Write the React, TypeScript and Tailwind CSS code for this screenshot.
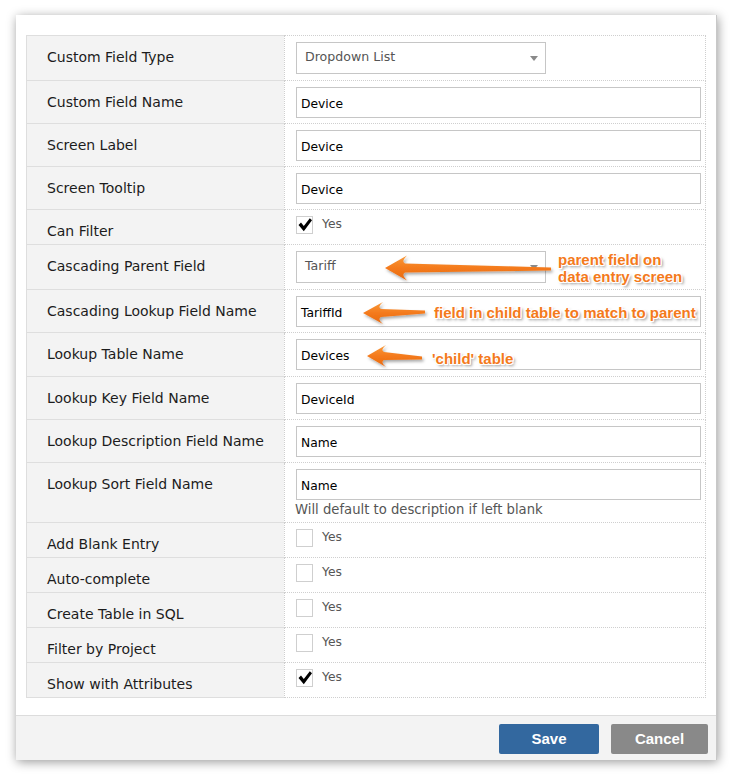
import React from "react";

const LABEL_FONT = { fontFamily: '"DejaVu Sans", Verdana, sans-serif' };

function Check() {
  return (
    <svg width="14" height="14" viewBox="0 0 14 14">
      <polygon points="0.5,7 3,4.6 5.8,8 11.8,0.3 14,2.3 5.8,13.2" fill="#000" />
    </svg>
  );
}

function CheckBox({ checked }: { checked?: boolean }) {
  return (
    <div className="flex items-center gap-[9px]">
      <div className="w-[17px] h-[18px] border border-[#cfcfcf] bg-white flex items-center justify-center">
        {checked ? <Check /> : null}
      </div>
      <span className="text-[12.3px] text-[#555] leading-[16px] -mt-[3px]">Yes</span>
    </div>
  );
}

function TextInput({ value }: { value: string }) {
  return (
    <div className="h-[31px] w-[405px] border border-[#c6c6c6] bg-white flex items-center pl-[4px] pt-[3px] text-[12.3px] text-black">
      {value}
    </div>
  );
}

function Select({ value }: { value: string }) {
  return (
    <div className="h-[32px] w-[250px] border border-[#c6c6c6] bg-white flex items-center justify-between pl-[8px] pr-[7px] text-[12.6px] text-[#555]">
      <span className="-mt-[1px]">{value}</span>
      <svg width="8" height="5" viewBox="0 0 8 5">
        <polygon points="0,0 8,0 4,5" fill="#8a8a8a" />
      </svg>
    </div>
  );
}

function Row({
  label,
  h,
  first,
  children,
}: {
  label: string;
  h: number;
  first?: boolean;
  children: React.ReactNode;
}) {
  return (
    <div className="flex" style={{ height: h }}>
      <div
        className={
          "w-[258px] shrink-0 bg-[#f3f3f3] border-l border-b border-solid border-[#dedede] pl-[20px] pt-[13px] text-[14px] leading-[16px] text-[#1c1c1c] " +
          (first ? "border-t" : "")
        }
      >
        {label}
      </div>
      <div
        className={
          "flex-1 border-l border-r border-b border-dotted border-[#cfcfcf] pl-[11px] pt-[6px] " +
          (first ? "border-t" : "")
        }
      >
        {children}
      </div>
    </div>
  );
}

function arrowPath(
  tx: number,
  ty: number,
  ex: number,
  ey: number,
  headLen: number,
  headHalf: number,
  s0: number,
  s1: number
) {
  const bx = tx + headLen;
  return [
    `M${tx},${ty}`,
    `L${bx},${ty - headHalf}`,
    `Q${bx - 6},${ty - s0 - 2} ${bx - 2},${ty - s0}`,
    `L${ex},${ey - s1}`,
    `L${ex},${ey + s1}`,
    `L${bx - 2},${ty + s0}`,
    `Q${bx - 6},${ty + s0 + 2} ${bx},${ty + headHalf}`,
    "Z",
  ].join(" ");
}

const annoClass =
  "absolute font-bold text-[15px] leading-[17px] text-[#f47a1c] whitespace-nowrap [text-shadow:1px_0_0_#fff,-1px_0_0_#fff,0_1px_0_#fff,0_-1px_0_#fff,1px_1px_0_#fff,-1px_-1px_0_#fff,1px_-1px_0_#fff,-1px_1px_0_#fff,2px_2px_3px_rgba(0,0,0,0.5)]";

export default function App() {
  return (
    <div
      className="relative w-[733px] h-[780px] bg-white pt-[15px] pl-[16px] overflow-hidden"
      style={LABEL_FONT}
    >
      <div className="w-[701px] h-[745px] bg-white flex flex-col border-r border-[#c8c8c8] shadow-[1px_2px_10px_rgba(0,0,0,0.4)]">
        <div className="flex-1 px-[10px] pt-[20px]">
          <Row label="Custom Field Type" h={46} first>
            <Select value="Dropdown List" />
          </Row>
          <Row label="Custom Field Name" h={43}>
            <TextInput value="Device" />
          </Row>
          <Row label="Screen Label" h={43}>
            <TextInput value="Device" />
          </Row>
          <Row label="Screen Tooltip" h={43}>
            <TextInput value="Device" />
          </Row>
          <Row label="Can Filter" h={35}>
            <CheckBox checked />
          </Row>
          <Row label="Cascading Parent Field" h={45}>
            <Select value="Tariff" />
          </Row>
          <Row label="Cascading Lookup Field Name" h={43}>
            <TextInput value="TariffId" />
          </Row>
          <Row label="Lookup Table Name" h={44}>
            <TextInput value="Devices" />
          </Row>
          <Row label="Lookup Key Field Name" h={43}>
            <TextInput value="DeviceId" />
          </Row>
          <Row label="Lookup Description Field Name" h={43}>
            <TextInput value="Name" />
          </Row>
          <Row label="Lookup Sort Field Name" h={60}>
            <TextInput value="Name" />
            <div className="text-[13.2px] leading-[16px] text-[#555] mt-[2px] -ml-[1px]">
              Will default to description if left blank
            </div>
          </Row>
          <Row label="Add Blank Entry" h={35}>
            <CheckBox />
          </Row>
          <Row label="Auto-complete" h={35}>
            <CheckBox />
          </Row>
          <Row label="Create Table in SQL" h={35}>
            <CheckBox />
          </Row>
          <Row label="Filter by Project" h={35}>
            <CheckBox />
          </Row>
          <Row label="Show with Attributes" h={35}>
            <CheckBox checked />
          </Row>
        </div>
        <div
          className="h-[45px] bg-[#f3f3f3] border-t border-[#dcdcdc] flex justify-end items-start pt-[8px] pr-[8px] gap-[12px]"
          style={{ fontFamily: '"Liberation Sans", Arial, sans-serif' }}
        >
          <button className="w-[100px] h-[30px] bg-[#33689f] text-white font-bold text-[15px] rounded-[2px]">
            Save
          </button>
          <button className="w-[97px] h-[30px] bg-[#898989] text-white font-bold text-[15px] rounded-[2px]">
            Cancel
          </button>
        </div>
      </div>

      <svg
        className="absolute left-0 top-0 pointer-events-none"
        width="733"
        height="780"
        viewBox="0 0 733 780"
      >
        <defs>
          <linearGradient id="ag" x1="0" y1="0" x2="0" y2="1">
            <stop offset="0" stopColor="#f99a3a" />
            <stop offset="0.5" stopColor="#f47a1c" />
            <stop offset="1" stopColor="#e86a10" />
          </linearGradient>
          <filter id="sh" x="-10%" y="-50%" width="130%" height="250%">
            <feDropShadow dx="1.5" dy="2" stdDeviation="1.5" floodColor="#000" floodOpacity="0.35" />
          </filter>
        </defs>
        <path d={arrowPath(385, 268, 551, 269, 22, 12.5, 4.5, 1.5)} fill="url(#ag)" filter="url(#sh)" />
        <path d={arrowPath(363, 313, 425, 312, 20, 11, 4, 1.5)} fill="url(#ag)" filter="url(#sh)" />
        <path d={arrowPath(367, 356, 422, 358, 19, 11, 4, 1.5)} fill="url(#ag)" filter="url(#sh)" />
      </svg>

      <div style={{ fontFamily: '"Liberation Sans", Arial, sans-serif' }}>
        <div className={annoClass} style={{ left: 558, top: 251 }}>
          parent field on
          <br />
          data entry screen
        </div>
        <div className={annoClass} style={{ left: 434, top: 304 }}>
          field in child table to match to parent
        </div>
        <div className={annoClass} style={{ left: 432, top: 350 }}>
          'child' table
        </div>
      </div>
    </div>
  );
}
